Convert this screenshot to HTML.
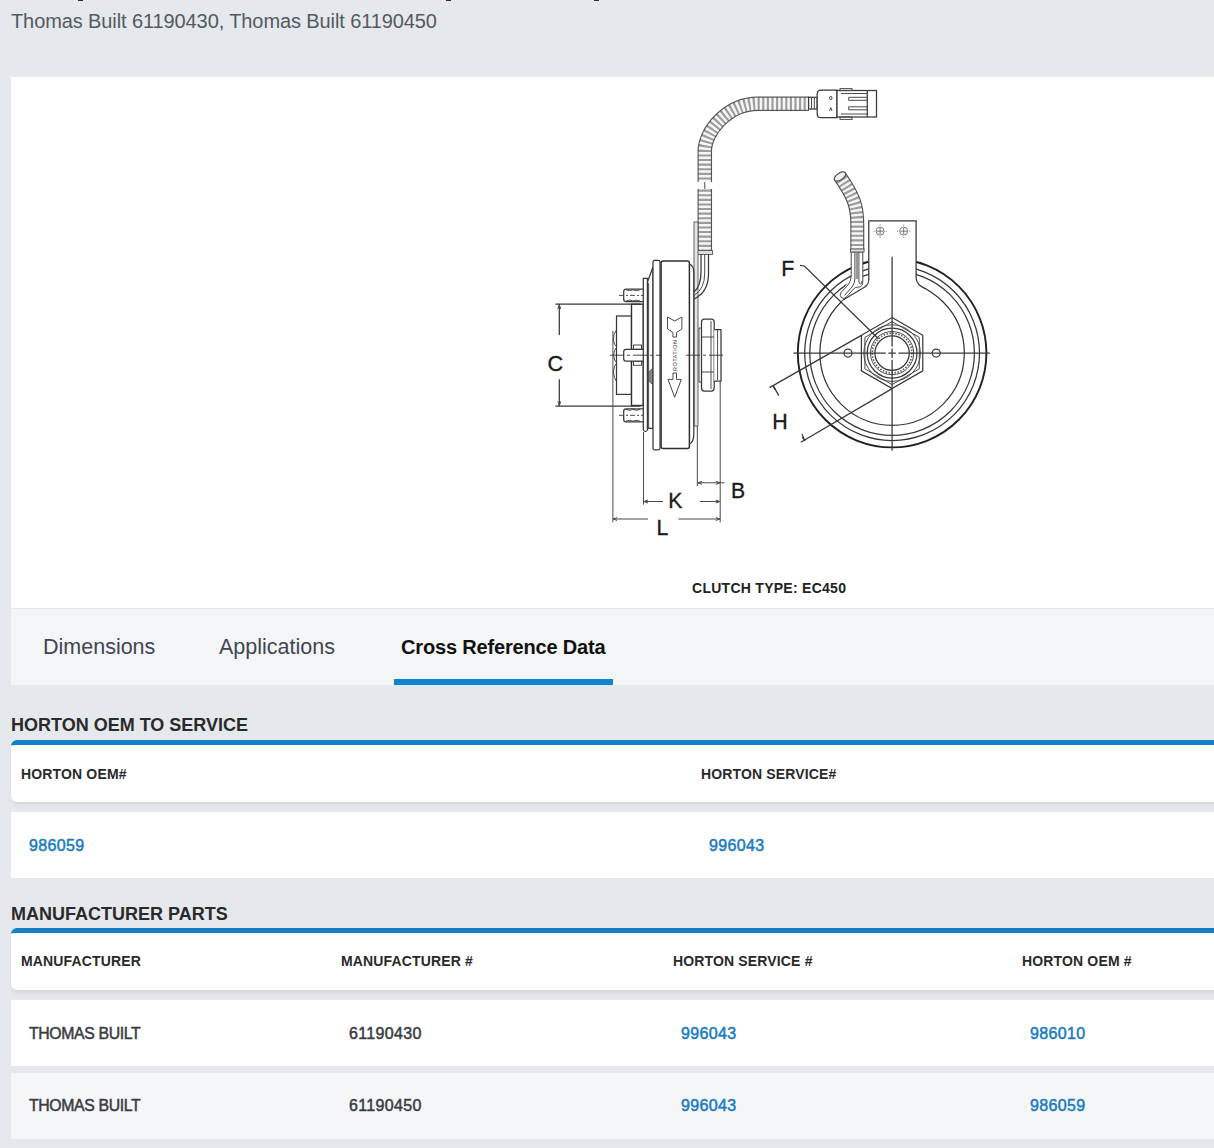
<!DOCTYPE html>
<html><head><meta charset="utf-8">
<style>
*{box-sizing:border-box;margin:0;padding:0}
html,body{width:1214px;height:1148px;overflow:hidden}
body{background:#e5e8ec;font-family:"Liberation Sans",sans-serif;position:relative}
.abs{position:absolute}
.sub{left:11px;top:10px;font-size:20px;letter-spacing:-0.1px;color:#555a60;white-space:nowrap}
.desc{background:#2b2f36;width:5px;height:1px;top:0}
.card{left:11px;top:77px;width:1203px;height:531px;background:#fff}
.clutch{left:692px;top:580px;font-size:14px;font-weight:bold;color:#222;letter-spacing:0.27px}
.tabs{left:11px;top:608px;width:1203px;height:77px;background:#f4f5f7;border-top:1px solid #e6e8eb}
.tab{top:635px;font-size:21.5px;color:#3f4652;white-space:nowrap}
.tab.act{color:#111;font-weight:bold;font-size:20px;letter-spacing:-0.17px;top:636px}
.uline{left:394px;top:679px;width:219px;height:6px;background:#0f84cc}
.h2{margin-top:1px;left:11px;font-size:18px;font-weight:bold;color:#2a2a2a;letter-spacing:0px;white-space:nowrap}
.hdr{left:11px;width:1210px;background:#fff;border-top:5px solid #1480c3;border-radius:6px;box-shadow:0 3px 4px -1px rgba(0,0,0,0.1)}
.row{left:11px;width:1210px;background:#fff}
.th{font-size:14px;font-weight:bold;color:#2a2a2a;letter-spacing:0.15px;white-space:nowrap}
.td{font-size:16px;font-weight:normal;-webkit-text-stroke:0.5px currentColor;color:#3a3d42;white-space:nowrap;letter-spacing:0.35px}
.tm{font-size:15.8px;letter-spacing:-0.35px}
.lk{color:#1a7bbf}
</style></head><body>
<div class="abs desc" style="left:78px"></div>
<div class="abs desc" style="left:446px"></div>
<div class="abs desc" style="left:594px"></div>
<div class="abs sub">Thomas Built 61190430, Thomas Built 61190450</div>

<div class="abs card"></div>
<svg class="abs" style="left:0;top:0" width="1214" height="607" viewBox="0 0 1214 607" id="drawing">
<defs>
<style>
.ln{fill:none;stroke:#383838;stroke-width:1.25}
.lt{fill:none;stroke:#4a4a4a;stroke-width:1}
.hv{fill:none;stroke:#222;stroke-width:1.9}
.wf{fill:#fff;stroke:#383838;stroke-width:1.25}
.cl{fill:none;stroke:#333;stroke-width:0.9;stroke-dasharray:14 3 3 3}
.dt{font-family:"Liberation Sans",sans-serif;fill:#1a1a1a;stroke:#1a1a1a;stroke-width:0.35}
</style>
</defs>
<!-- ===== SIDE VIEW ===== -->
<!-- cable tube (side) -->
<g>
<path d="M704.8 182 V151 C704.8 132 727 103.7 758 103.7 H809" fill="none" stroke="#555" stroke-width="14.5"/>
<path d="M704.8 182 V151 C704.8 132 727 103.7 758 103.7 H809" fill="none" stroke="#9c9c9c" stroke-width="12.1"/>
<path d="M704.8 182 V151 C704.8 132 727 103.7 758 103.7 H809" fill="none" stroke="#f6f6f6" stroke-width="12.1" stroke-dasharray="2.5 2.1"/>
<path d="M704.8 254 V189" fill="none" stroke="#555" stroke-width="14.5"/>
<path d="M704.8 254 V189" fill="none" stroke="#9c9c9c" stroke-width="12.1"/>
<path d="M704.8 254 V189" fill="none" stroke="#f6f6f6" stroke-width="12.1" stroke-dasharray="2.5 2.1"/>
<line x1="704.8" y1="182" x2="704.8" y2="189" class="lt"/>
<rect x="697.5" y="250.5" width="15" height="4" fill="#ddd" stroke="#555" stroke-width="0.9"/>
</g>
<!-- coupling + connector -->
<rect x="808.6" y="97.3" width="8.6" height="11.7" class="wf"/>
<line x1="811.5" y1="97.3" x2="811.5" y2="109" class="lt"/><line x1="814.3" y1="97.3" x2="814.3" y2="109" class="lt"/>
<path d="M837 90 H821 Q817.2 90 817.2 94 V113.7 Q817.2 117.7 821 117.7 H837 Z" class="wf"/>
<rect x="837" y="90.5" width="39.5" height="26.5" class="wf"/>
<rect x="840" y="88.6" width="12" height="2" class="lt"/>
<rect x="840" y="117" width="12" height="2.4" class="lt"/>
<line x1="867.3" y1="90.5" x2="867.3" y2="117" class="ln"/>
<path d="M841 93.5 H867.3 M848.7 97.3 H867.3 V100.3 H848.7 Z M848.7 106.8 H867.3 V109.8 H848.7 Z M841 114 H867.3" class="lt"/>
<ellipse cx="830.8" cy="98" rx="1.2" ry="1.7" class="lt"/>
<path d="M829.5 111 L830.8 107.5 L832.1 111" class="lt"/>

<!-- vertical plate beside body -->
<rect x="694" y="222" width="4" height="204" fill="#e6e6e6" stroke="#555" stroke-width="0.9"/>
<!-- wires from tube down into body -->
<path d="M701 254 V272 Q701 286 694 292" class="ln"/>
<path d="M708.5 254 V274 Q708.5 292 694 299" class="ln"/>
<path d="M704.7 254 V273 Q704.7 289 694 295.5" class="lt"/>

<!-- hub dome -->
<path d="M617 329 Q613 334 613.4 340 Q614 345 616.8 347 Q614 350 613.6 355 Q614 361 616.8 363 Q613.6 366 613.4 372 Q613.6 378 617 382" class="lt"/>
<!-- hub inner rect -->
<rect x="616.5" y="316" width="15" height="78.4" class="wf"/>
<!-- hub flange -->
<rect x="631.5" y="304.2" width="11.8" height="101.3" fill="#fff" stroke="#2e2e2e" stroke-width="1.4"/>
<rect x="633.5" y="345" width="8" height="4.3" class="lt"/>
<rect x="633.5" y="361" width="8" height="4.3" class="lt"/>
<!-- studs -->
<path d="M643.3 289.2 H626 Q623.7 289.2 623.7 291.5 V299.3 Q623.7 301.6 626 301.6 H643.3" fill="#fff" stroke="#383838" stroke-width="1.25"/>
<path d="M626 289.8 Q629.5 291.6 633 289.8 Q636.5 291.6 640 289.8 M626 301 Q629.5 299.2 633 301 Q636.5 299.2 640 301" class="lt"/>
<path d="M643.3 408.8 H626 Q623.7 408.8 623.7 411.1 V419.5 Q623.7 421.8 626 421.8 H643.3" fill="#fff" stroke="#383838" stroke-width="1.25"/>
<path d="M626 409.4 Q629.5 411.2 633 409.4 Q636.5 411.2 640 409.4 M626 421.2 Q629.5 419.4 633 421.2 Q636.5 419.4 640 421.2" class="lt"/>
<path d="M643.3 349.3 H626 Q623.7 349.3 623.7 351.6 V358.7 Q623.7 361 626 361 H643.3" class="wf"/>
<line x1="619" y1="295.4" x2="648" y2="295.4" class="lt" stroke-dasharray="5 2 2 2"/>
<line x1="619" y1="415.3" x2="648" y2="415.3" class="lt" stroke-dasharray="5 2 2 2"/>
<!-- plate -->
<path d="M643.3 278.3 H647.5 V430 Q645.4 433 643.3 430 Z" class="wf"/>
<!-- chamfered ring -->
<path d="M647.5 282 L653 267 V428.4 H647.5 Z" class="wf"/>
<path d="M653 368.5 Q647.6 371 647.8 376.5 Q648 382 653 384.5 Z" fill="#888" stroke="#444" stroke-width="0.8"/>
<path d="M648.6 283 V428" class="lt"/>
<!-- flange -->
<rect x="653" y="260.4" width="7" height="189.4" rx="1.5" class="wf"/>
<!-- main body -->
<rect x="661.1" y="261" width="28.3" height="187.6" rx="2" fill="#fff" stroke="#2e2e2e" stroke-width="1.5"/>
<!-- right of body -->
<path d="M689.4 264 Q693.8 266 693.8 272 V434 Q693.8 442 689.4 444" class="ln"/>
<!-- right hub -->
<rect x="701.5" y="319.2" width="12.7" height="71.8" rx="3" class="wf"/>
<path d="M714.2 329.6 H721 V381 H714.2" class="wf"/>
<line x1="711" y1="321" x2="711" y2="389" class="lt"/>
<line x1="717.6" y1="330" x2="717.6" y2="380" class="lt"/>
<path d="M699 328 H701.5 M699 382 H701.5 M699 328 V382" class="lt"/>
<path d="M702 337 H714 M702 372 H714" class="lt"/>
<!-- arrow + rotation -->
<path d="M667.5 317 L674.7 321 L681.9 317 V329 L676.5 332.5 V337 H672.9 V332.5 L667.5 329 Z" class="lt"/>
<text x="0" y="0" transform="translate(677.4,371) rotate(-90)" font-size="5.4" font-family="Liberation Sans" letter-spacing="0.55" fill="#333">ROTATION</text>
<path d="M673 373 H676.5 V379.4 H681.3 L674.7 397.3 L668 379.4 H673 Z" class="lt"/>
<!-- centerline side -->
<line x1="610" y1="355.2" x2="662" y2="355.2" class="cl"/>
<line x1="686" y1="355.2" x2="723" y2="355.2" class="cl"/>

<!-- dimension C -->
<path d="M555.4 304.2 H640.7 M555.4 406.1 H640.7 M559.3 304.2 V335 M559.3 379.3 V406.1" class="ln"/>
<path d="M557.8 309 L559.3 304.6 L560.8 309 M557.8 401.3 L559.3 405.7 L560.8 401.3" class="lt"/>
<text x="547.6" y="371" font-size="21.6" class="dt">C</text>
<!-- extension lines -->
<path d="M612.9 331 V522.4 M643.5 432 V504.6 M697.3 426 V486.1 M720.2 381 V522.4" class="lt"/>
<path d="M697.3 482.8 H724.5 M643.5 501.5 H663 M700 501.5 H720.2 M612.9 519 H648 M678.4 519 H720.2" class="lt"/>
<path d="M702 481.3 L697.8 482.8 L702 484.3 M715.8 481.3 L720 482.8 L715.8 484.3 M648 500 L643.9 501.5 L648 503 M715.8 500 L719.8 501.5 L715.8 503 M617 517.5 L613.3 519 L617 520.5 M715.8 517.5 L719.8 519 L715.8 520.5" class="lt"/>
<text x="731" y="498.3" font-size="21.2" class="dt">B</text>
<text x="668.3" y="507.5" font-size="21.2" class="dt">K</text>
<text x="656.4" y="535.2" font-size="21.2" class="dt">L</text>

<!-- ===== FRONT VIEW ===== -->
<circle cx="892.1" cy="353.1" r="94.3" class="hv"/>
<circle cx="892.1" cy="353.1" r="87.4" class="ln"/>
<circle cx="892.1" cy="353.1" r="82.3" class="ln"/>
<circle cx="892.1" cy="353.1" r="72.2" class="ln"/>
<!-- bracket fill -->
<path d="M868.4 220.8 H916.1 V277.5 Q916.1 284 926.4 289.3 L930 300 L840 306 L843 300 L864 287.6 Q868.8 285 868.8 279.6 Z" fill="#fff"/>
<path d="M851.2 277 L862.8 277 L868.8 280 L864 287.6 L843 300 L839.5 296 Z" fill="#fff"/>
<path d="M868.8 280 V220.8 H916.1 V277.5 Q916.1 285 926.4 289.3" class="ln"/>
<!-- holes in bracket -->
<g fill="none" stroke="#555" stroke-width="0.8">
<circle cx="880.1" cy="231.2" r="4"/>
<path d="M880.1 228 V234.4 M876.9 231.2 H883.3 M880.1 224.6 V225.6 M880.1 236.8 V237.8 M873.5 231.2 H874.5 M885.7 231.2 H886.7"/>
<circle cx="903.7" cy="231.2" r="4"/>
<path d="M903.7 228 V234.4 M900.5 231.2 H906.9 M903.7 224.6 V225.6 M903.7 236.8 V237.8 M897.1 231.2 H898.1 M909.3 231.2 H910.3"/>
</g>
<!-- front cable -->
<g>
<path d="M840 176.5 C854 197 857.3 206 857.3 225 V251.5" fill="none" stroke="#555" stroke-width="14"/>
<path d="M840 176.5 C854 197 857.3 206 857.3 225 V251.5" fill="none" stroke="#9c9c9c" stroke-width="11.6"/>
<path d="M840 176.5 C854 197 857.3 206 857.3 225 V251.5" fill="none" stroke="#f6f6f6" stroke-width="11.6" stroke-dasharray="2.5 2.1"/>
<ellipse cx="840" cy="176.5" rx="6.6" ry="3.4" transform="rotate(-34 840 176.5)" fill="#f2f2f2" stroke="#555" stroke-width="1.2"/>
</g>
<path d="M851.2 252 V276 Q851.2 281 848 285 L841 292.5 Q839 295.5 841.5 297.8 Q844 299.5 846.6 296.8 L853.5 289 Q855 287 858.8 287 Q862.8 287 862.8 281 V252 Z" fill="#fff" stroke="#4a4a4a" stroke-width="1"/>
<path d="M854.9 252 V279 Q854.9 283 852 287 L844.5 295.5" class="lt"/>
<path d="M858.9 252 V281 Q858.9 284 860.8 284 Q862 284 862 281" class="lt"/>
<line x1="856.9" y1="252" x2="856.9" y2="279" stroke="#999" stroke-width="2.2"/>
<path d="M868.8 279.6 Q868.8 285 864 287.6 L843 300" fill="none" stroke="#3c3c3c" stroke-width="1.1"/>
<rect x="850.5" y="249" width="13.5" height="3" fill="#ddd" stroke="#555" stroke-width="0.9"/>
<!-- hex nut -->
<polygon points="892.1,317.6 922.8,335.35 922.8,370.85 892.1,388.6 861.4,370.85 861.4,335.35" fill="#fff" stroke="#333" stroke-width="1.2"/>
<polygon points="892.1,321.6 919.3,337.35 919.3,368.85 892.1,384.6 864.9,368.85 864.9,337.35" class="lt"/>
<circle cx="892.1" cy="353.1" r="28.3" class="lt"/>
<circle cx="892.1" cy="353.1" r="24.9" class="ln"/>
<circle cx="892.1" cy="353.1" r="21.6" class="lt"/>
<circle cx="892.1" cy="353.1" r="19.8" fill="none" stroke="#555" stroke-width="1.6" stroke-dasharray="1.5 1.5"/>
<circle cx="892.1" cy="353.1" r="17.2" class="ln"/>
<!-- small holes -->
<circle cx="848" cy="353.1" r="4" class="wf"/>
<circle cx="936.2" cy="353.1" r="4" class="wf"/>
<!-- centerlines -->
<path d="M793.4 353.1 H885.8 M888.4 353.1 H895.8 M898.4 353.1 H989.8" class="ln"/>
<path d="M892.1 256.7 V346.7 M892.1 348.6 V357.9 M892.1 359.8 V450.8" class="ln"/>
<!-- F leader -->
<path d="M800 265.3 L804.4 266 L878.4 338.8" class="ln"/>
<text x="781.2" y="275.8" font-size="21.4" class="dt">F</text>
<!-- H -->
<path d="M769.5 387.6 L861.4 335.35 M800.8 442.3 L892.1 388.6" class="ln"/>
<path d="M773.2 385.6 L778.8 395.6 M802 434.2 L805 441" class="ln"/><path d="M772.6 385.9 L775.8 388.6 L774.6 390.2 Z M804.4 440.6 L801.6 437.8 L803.2 436.8 Z" fill="#333"/>
<text x="772.3" y="429" font-size="21.4" class="dt">H</text>
</svg>
<div class="abs clutch">CLUTCH TYPE: EC450</div>

<div class="abs tabs"></div>
<div class="abs tab" style="left:43px">Dimensions</div>
<div class="abs tab" style="left:219px">Applications</div>
<div class="abs tab act" style="left:401px">Cross Reference Data</div>
<div class="abs uline"></div>

<div class="abs h2" style="top:714px">HORTON OEM TO SERVICE</div>
<div class="abs hdr" style="top:740px;height:62px"></div>
<div class="abs th" style="left:21px;top:766px">HORTON OEM#</div>
<div class="abs th" style="left:701px;top:766px">HORTON SERVICE#</div>
<div class="abs row" style="top:812px;height:66px"></div>
<div class="abs td lk" style="left:29px;top:837px">986059</div>
<div class="abs td lk" style="left:709px;top:837px">996043</div>

<div class="abs h2" style="top:903px">MANUFACTURER PARTS</div>
<div class="abs hdr" style="top:928px;height:62px"></div>
<div class="abs th" style="left:21px;top:953px">MANUFACTURER</div>
<div class="abs th" style="left:341px;top:953px">MANUFACTURER #</div>
<div class="abs th" style="left:673px;top:953px">HORTON SERVICE #</div>
<div class="abs th" style="left:1022px;top:953px">HORTON OEM #</div>
<div class="abs row" style="top:1000px;height:66px"></div>
<div class="abs td tm" style="left:29px;top:1025px">THOMAS BUILT</div>
<div class="abs td" style="left:349px;top:1025px">61190430</div>
<div class="abs td lk" style="left:681px;top:1025px">996043</div>
<div class="abs td lk" style="left:1030px;top:1025px">986010</div>
<div class="abs row" style="top:1073px;height:66px;background:#f5f6f8"></div>
<div class="abs td tm" style="left:29px;top:1097px">THOMAS BUILT</div>
<div class="abs td" style="left:349px;top:1097px">61190450</div>
<div class="abs td lk" style="left:681px;top:1097px">996043</div>
<div class="abs td lk" style="left:1030px;top:1097px">986059</div>
</body></html>
